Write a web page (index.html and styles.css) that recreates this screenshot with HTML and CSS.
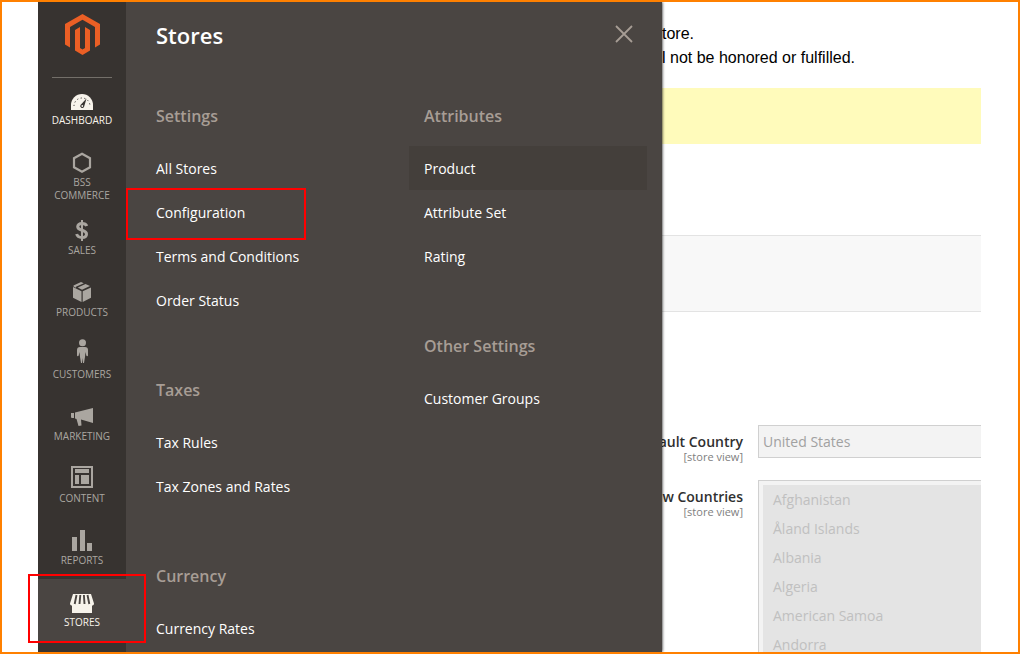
FILE: index.html
```html
<!DOCTYPE html>
<html lang="en">
<head>
<meta charset="utf-8">
<title>Stores</title>
<link rel="stylesheet" href="styles.css">
</head>
<body>
<div class="app">
  <nav class="sidebar" aria-label="Main">
    <a class="logo" href="#" aria-label="Home">
      <svg width="36" height="42" viewBox="0 0 36 42"><path fill="#eb5f25" d="M18.500 0 36 10V30.500L31 33.500V13L18.500 5.800 6 13V33.500L1 30.500V10ZM16 13V34L18.500 35.500 21 34V13L26 16V36.500L18.500 41 11 36.500V16Z"/></svg>
    </a>
    <ul class="nav">
      <li><a class="nav-item bright" href="#"><svg class="icon" viewBox="0 0 28 28"><path fill="currentColor" d="M3 26V21a11 11 0 0 1 22 0v5Z"/><path fill="none" stroke="#373330" stroke-width="1" stroke-dasharray="1.200 2.500" d="M6 22a8 8 0 0 1 16 0"/><path fill="#373330" d="M18.500 14.500 16 23a2 2 0 1 1-3.500-2Z"/><circle cx="14.300" cy="22" r=".9" fill="currentColor"/></svg><span>Dashboard</span></a></li>
      <li><a class="nav-item" href="#"><svg class="icon" viewBox="0 0 28 28"><path fill="none" stroke="currentColor" stroke-width="2.200" d="M14 7.700 22 12.200V21.300L14 25.700 6 21.300V12.200Z"/></svg><span>BSS Commerce</span></a></li>
      <li><a class="nav-item" href="#"><svg class="icon" viewBox="0 0 28 28"><path fill="none" stroke="currentColor" stroke-width="3" d="M18.800 12C18 10 16 9.500 14 9.500c-2.800 0-4.300 1.300-4.300 3.200 0 4.500 8.800 2.700 8.800 7.300 0 2.200-1.800 3.500-4.500 3.500-2.500 0-4.700-1-5.300-3.500"/><path fill="none" stroke="currentColor" stroke-width="2" d="M14 6V27"/></svg><span>Sales</span></a></li>
      <li><a class="nav-item" href="#"><svg class="icon" viewBox="0 0 28 28"><path fill="currentColor" d="M13 6 5.500 9.500 8 10.700 15.800 7.200ZM17.500 8 9.800 11.500 14 13.700 22 10ZM5 11 13.500 15.300V26L5 21.800ZM23 11.500 14.700 15.300V26L23 21.800ZM5.500 9.500v1l2.500 1.300V10.700Z"/></svg><span>Products</span></a></li>
      <li><a class="nav-item" href="#"><svg class="icon" viewBox="0 0 28 28"><circle cx="14.500" cy="4.800" r="3.500" fill="currentColor"/><path fill="currentColor" d="M12 9h5c2 0 3 1 3 3v5.500c0 1-1.500 1-1.700 0L17.500 14 17 19l-1 6h-1l-.5-5-.5 5h-1l-1-6-.5-5-.8 3.500c-.2 1-1.700 1-1.700 0V12c0-2 1-3 3-3Z"/></svg><span>Customers</span></a></li>
      <li><a class="nav-item" href="#"><svg class="icon" viewBox="0 0 28 28"><path fill="currentColor" d="M3 13H6V18H3.500L3 17ZM7 12.500 25 8V23L13 19.500 13.500 25.500 10.500 26 8.500 19 7 18.500Z"/></svg><span>Marketing</span></a></li>
      <li><a class="nav-item" href="#"><svg class="icon" viewBox="0 0 28 28"><path fill="none" stroke="currentColor" stroke-width="2" d="M4 5H24V25H4Z"/><path fill="currentColor" d="M7 7H21V11H7ZM7 13H11V22H7ZM13 13H21V22H13Z"/></svg><span>Content</span></a></li>
      <li><a class="nav-item" href="#"><svg class="icon" viewBox="0 0 28 28"><path fill="currentColor" d="M4 13H9V27H4ZM12 6H17V27H12ZM19 19H24V27H19Z"/></svg><span>Reports</span></a></li>
      <li class="marked"><a class="nav-item bright active" href="#"><svg class="icon" viewBox="0 0 28 28"><path fill="currentColor" d="M5 8H23L26 17.500C26 19 25 19.500 24 19.500V27H4V19.500C3 19.500 2 19 2 17.500Z"/><path stroke="#4a4542" stroke-width="1.900" d="M8.500 9 6.700 18M12.300 9 11.500 18M15.900 9 16.500 18M19.500 9 21.300 18"/></svg><span>Stores</span></a></li>
    </ul>
  </nav>

  <section class="flyout" aria-label="Stores">
    <header class="flyout-head">
      <h1>Stores</h1>
      <button class="close" type="button" aria-label="Close"><svg width="18" height="18" viewBox="0 0 18 18"><path fill="none" stroke="currentColor" stroke-width="1.800" d="M1 1 17 17M17 1 1 17"/></svg></button>
    </header>
    <div class="columns">
      <div class="column">
        <section><h2>Settings</h2><ul>
          <li><a href="#">All Stores</a></li>
          <li class="marked"><a href="#">Configuration</a></li>
          <li><a href="#">Terms and Conditions</a></li>
          <li><a href="#">Order Status</a></li></ul></section>
        <section><h2>Taxes</h2><ul>
          <li><a href="#">Tax Rules</a></li>
          <li><a href="#">Tax Zones and Rates</a></li></ul></section>
        <section><h2>Currency</h2><ul>
          <li><a href="#">Currency Rates</a></li></ul></section>
      </div>
      <div class="column">
        <section><h2>Attributes</h2><ul>
          <li><a class="hover" href="#">Product</a></li>
          <li><a href="#">Attribute Set</a></li>
          <li><a href="#">Rating</a></li></ul></section>
        <section><h2>Other Settings</h2><ul>
          <li><a href="#">Customer Groups</a></li></ul></section>
      </div>
    </div>
  </section>

  <main class="content">
    <p class="notice">tore.<br>l not be honored or fulfilled.</p>
    <div class="message"></div>
    <div class="toolbar"></div>
    <form class="form">
      <label class="label" for="country"><b>ault Country</b><small>[store view]</small></label>
      <select class="field single" id="country" disabled><option>United States</option></select>
      <label class="label" for="countries"><b>w Countries</b><small>[store view]</small></label>
      <select class="field list" id="countries" multiple disabled size="6">
        <option>Afghanistan</option><option>Åland Islands</option><option>Albania</option><option>Algeria</option><option>American Samoa</option><option>Andorra</option>
      </select>
    </form>
  </main>
</div>
</body>
</html>
```
FILE: styles.css
```css
* { box-sizing: border-box; }
body { margin: 0; font: 14px/20px "Open Sans", "Noto Sans", sans-serif; background: #fff; }
h1, h2, ul, p { margin: 0; padding: 0; }
ul { list-style: none; }
a { color: inherit; text-decoration: none; }

.app {
  display: grid;
  grid-template-columns: 88px 536px minmax(0, 1fr);
  height: 100vh;
  padding-left: 36px;
  border: 2px solid #ff8000;
  overflow: hidden;
}
.app > * { min-height: 0; }

.sidebar { position: relative; z-index: 2; background: #373330; color: #aaa6a0; }
.logo { display: flex; justify-content: center; height: 75px; padding-top: 12px; margin: 0 14px; }
.nav { position: relative; }
.nav::before { content: ""; position: absolute; top: 0; left: 14px; right: 14px; border-top: 1px solid #736f69; }
.nav-item {
  display: flex; flex-direction: column; align-items: center; gap: 2px;
  min-height: 62px; padding: 7px 8px 5px;
  font-size: 10px; line-height: 13px; text-align: center; text-transform: uppercase;
}
.icon { width: 28px; height: 28px; flex: none; }
.bright { color: #f7f3eb; }
.active { background: #4a4542; }

.marked { position: relative; }
.marked::after { content: ""; position: absolute; border: 2px solid #f00; pointer-events: none; }
.nav .marked::after { inset: -5px -20px -2px -10px; }
.column .marked::after { inset: -2px 73px -6px -15px; }

.flyout { position: relative; z-index: 1; background: #4a4542; color: #fff; box-shadow: 0 0 3px #000; }
.flyout-head { display: flex; justify-content: space-between; height: 102px; padding: 17px 29px 0 30px; }
.flyout h1 { font-size: 22px; line-height: 32px; font-weight: 600; }
.close { display: flex; align-self: flex-start; padding: 6px 0 0; border: 0; background: none; color: #a79d95; }
.columns { display: grid; grid-template-columns: 1fr 1fr; gap: 30px; padding: 0 15px; }
.column { display: flex; flex-direction: column; gap: 56px; }
.column h2 { margin-bottom: 18px; padding-left: 15px; font-size: 16px; line-height: 24px; font-weight: 600; color: #a79d95; }
.column a { display: block; padding: 13px 15px 11px; }
.column .hover { background: #443f3b; }

.content { display: flex; flex-direction: column; padding: 20px 37px 0 0; }
.notice { font: 16px/24px "Liberation Sans", Arial, sans-serif; color: #000; }
.message { height: 56px; margin-top: 18px; background: #fffbbb; flex: none; }
.toolbar { height: 77px; margin: 91px 0 113px; flex: none; border: solid #e3e3e3; border-width: 1px 0; background: #f8f8f8; }
.form { display: grid; grid-template-columns: 81px minmax(0, 1fr); grid-template-rows: 33px auto; gap: 22px 15px; align-items: start; }
.label { display: flex; flex-direction: column; align-items: flex-end; padding-top: 7px; white-space: nowrap; color: #303030; }
.label b { font-weight: 600; }
.label small { font-size: 11px; line-height: 10px; color: #808080; }
.field { width: 100%; margin: 0; border: 1px solid #d0d0d0; border-right: 0; border-radius: 0; outline: 0; background: #f3f3f3; color: #a1a1a1; font: inherit; opacity: 1; appearance: none; }
.single { height: 33px; padding: 0 4px; }
.list { padding: 4px 0 0 4px; overflow: hidden; }
.list option { min-height: 29px; padding: 5px 10px 4px; line-height: 20px; background: #e4e4e4; color: #c0c0c0; }
```
